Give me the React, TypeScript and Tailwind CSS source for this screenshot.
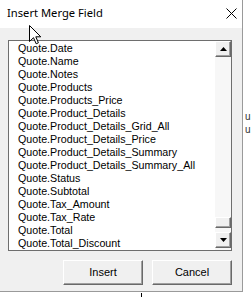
import React from "react";

const items = [
  "Quote.Date",
  "Quote.Name",
  "Quote.Notes",
  "Quote.Products",
  "Quote.Products_Price",
  "Quote.Product_Details",
  "Quote.Product_Details_Grid_All",
  "Quote.Product_Details_Price",
  "Quote.Product_Details_Summary",
  "Quote.Product_Details_Summary_All",
  "Quote.Status",
  "Quote.Subtotal",
  "Quote.Tax_Amount",
  "Quote.Tax_Rate",
  "Quote.Total",
  "Quote.Total_Discount",
];

const raised =
  "border border-t-white border-l-white border-b-[#696969] border-r-[#696969] bg-[#f0f0f0] shadow-[inset_-1px_-1px_0_#a0a0a0]";

export default function App() {
  return (
    <div className="relative w-[252px] h-[297px] bg-white overflow-hidden">
      <div className="w-[243px] h-[292px] flex flex-col border-r border-b border-[#9a9a9a]">
        {/* title bar */}
        <div className="h-[28px] bg-white flex items-center justify-between pl-[7px] pr-[5px]">
          <span className="text-[11.2px] leading-none text-black font-['Segoe_UI','Noto_Sans',sans-serif] pb-[2px]">
            Insert Merge Field
          </span>
          <svg width="11" height="11" viewBox="0 0 11 11" className="mb-[2px]">
            <path d="M0.5 0.5 L10.5 10.5 M10.5 0.5 L0.5 10.5" stroke="#000" strokeWidth="1" />
          </svg>
        </div>
        {/* body */}
        <div className="flex-1 bg-[#f0f0f0] pt-[12px] pl-[8px] flex flex-col font-['Tahoma','Liberation_Sans',sans-serif]">
          <div className="w-[224px] h-[211px] border border-[#6e6e6e] bg-white flex">
            <div className="flex-1 pt-[1px] pl-[9px] flex flex-col">
              {items.map((t) => (
                <div key={t} className="h-[13px] leading-[13px] text-[10.7px] text-black whitespace-nowrap">
                  {t}
                </div>
              ))}
            </div>
            <div className="w-[16px] flex flex-col pb-[2px] bg-[#f7f7f7]">
              <div className={`h-[16px] ${raised} flex items-center justify-center`}>
                <svg width="7" height="4" viewBox="0 0 7 4">
                  <path d="M3.5 0 L7 4 L0 4 Z" fill="#000" />
                </svg>
              </div>
              <div className="flex-1" />
              <div className={`h-[11px] ${raised}`} />
              <div className="h-[4px]" />
              <div className={`h-[16px] ${raised} flex items-center justify-center`}>
                <svg width="7" height="4" viewBox="0 0 7 4">
                  <path d="M0 0 L7 0 L3.5 4 Z" fill="#000" />
                </svg>
              </div>
            </div>
          </div>
          <div className="mt-[9px] pl-[55px] flex gap-[9px]">
            <div className={`w-[80px] h-[25px] ${raised} flex items-center justify-center text-[11px] text-black`}>
              Insert
            </div>
            <div className={`w-[80px] h-[25px] ${raised} flex items-center justify-center text-[11px] text-black`}>
              Cancel
            </div>
          </div>
        </div>
      </div>
      {/* Excel content behind */}
      <div className="absolute left-[141px] top-[293px] w-[1px] h-[4px] bg-black" />
      <span className="absolute left-[245px] top-[112px] text-[10px] leading-none text-[#333] font-['Liberation_Sans',sans-serif]">u</span>
      <span className="absolute left-[245px] top-[125px] text-[10px] leading-none text-[#333] font-['Liberation_Sans',sans-serif]">u</span>
      {/* mouse cursor */}
      <svg className="absolute left-[29px] top-[25px]" width="13" height="20" viewBox="0 0 13 20">
        <path
          d="M0.5 0.5 L0.5 16.5 L4.5 12.7 L7.2 18.8 L9.4 17.8 L6.8 11.8 L11.8 11.8 Z"
          fill="#fff"
          stroke="#000"
          strokeWidth="1"
          strokeLinejoin="miter"
        />
      </svg>
    </div>
  );
}
